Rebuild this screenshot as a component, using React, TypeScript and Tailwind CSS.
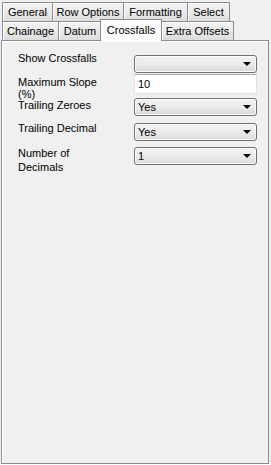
import React from 'react';

const tabBase =
  'h-full flex items-center justify-center border border-b-0 border-[#898c95] bg-gradient-to-b from-[#f3f3f3] via-[#ebebeb] to-[#dcdcdc] shadow-[inset_1px_1px_0_#ffffff] -ml-px first:ml-0 text-black';

function Tab({ label, width }: { label: string; width: number }) {
  return (
    <div className={tabBase} style={{ width }}>
      {label}
    </div>
  );
}

function Combo({ value }: { value?: string }) {
  return (
    <div className="h-[18px] w-[123px] rounded-[3px] border border-[#707070] bg-gradient-to-b from-[#f2f2f2] via-[#ebebeb] to-[#d9d9d9] flex items-center pl-[3px] pr-[5px] shadow-[inset_0_0_0_1px_#fcfcfc]">
      <span className="flex-1 leading-none">{value}</span>
      <span className="w-0 h-0 border-l-[4px] border-r-[4px] border-t-[4px] border-l-transparent border-r-transparent border-t-black" />
    </div>
  );
}

export default function App() {
  return (
    <div className="w-[271px] h-[465px] bg-[#f0f0f0] text-[11px] leading-[13px] text-black overflow-hidden" style={{ fontFamily: '"Liberation Sans", Arial, sans-serif' }}>
      <div className="pl-[2px] pt-[2px] flex h-[21px]">
        <Tab label="General" width={51} />
        <Tab label="Row Options" width={72} />
        <Tab label="Formatting" width={65} />
        <Tab label="Select" width={43} />
      </div>
      <div className="pl-[2px] flex h-[19px] items-end relative z-10">
        <div className="flex h-[19px]">
          <Tab label="Chainage" width={57} />
          <Tab label="Datum" width={44} />
        </div>
        <div className="-ml-[2px] h-[22px] w-[62px] flex items-start pt-[4px] justify-center border border-b-0 border-[#898c95] bg-[#fcfcfc] self-end mb-[-1px] relative z-20">
          Crossfalls
        </div>
        <div className="flex h-[19px] -ml-[1px]">
          <Tab label="Extra Offsets" width={73} />
        </div>
      </div>
      <div className="ml-px w-[268px] h-[424px] border border-[#898c95] bg-[#f0f0f0] shadow-[inset_1px_1px_0_#ffffff] pt-[11px] pl-[16px]">
        <div className="flex h-[22px] items-start">
          <div className="w-[116px]">Show Crossfalls</div>
          <div className="mt-[3px]"><Combo /></div>
        </div>
        <div className="flex h-[24px] items-start">
          <div className="w-[116px] mt-[2px] leading-[12px]">Maximum Slope<br />(%)</div>
          <div className="h-[20px] w-[123px] border border-[#e3e3e3] border-t-[#abadb3] bg-white flex items-center pl-[3px]">10</div>
        </div>
        <div className="flex h-[24px] items-start">
          <div className="w-[116px] mt-[1px]">Trailing Zeroes</div>
          <div><Combo value="Yes" /></div>
        </div>
        <div className="flex h-[24px] items-start">
          <div className="w-[116px]">Trailing Decimal</div>
          <div className="mt-[1px]"><Combo value="Yes" /></div>
        </div>
        <div className="flex h-[24px] items-start">
          <div className="w-[116px] leading-[14px]">Number of<br />Decimals</div>
          <div className="mt-[1px]"><Combo value="1" /></div>
        </div>
      </div>
      <div className="h-[3px] bg-white" />
    </div>
  );
}
